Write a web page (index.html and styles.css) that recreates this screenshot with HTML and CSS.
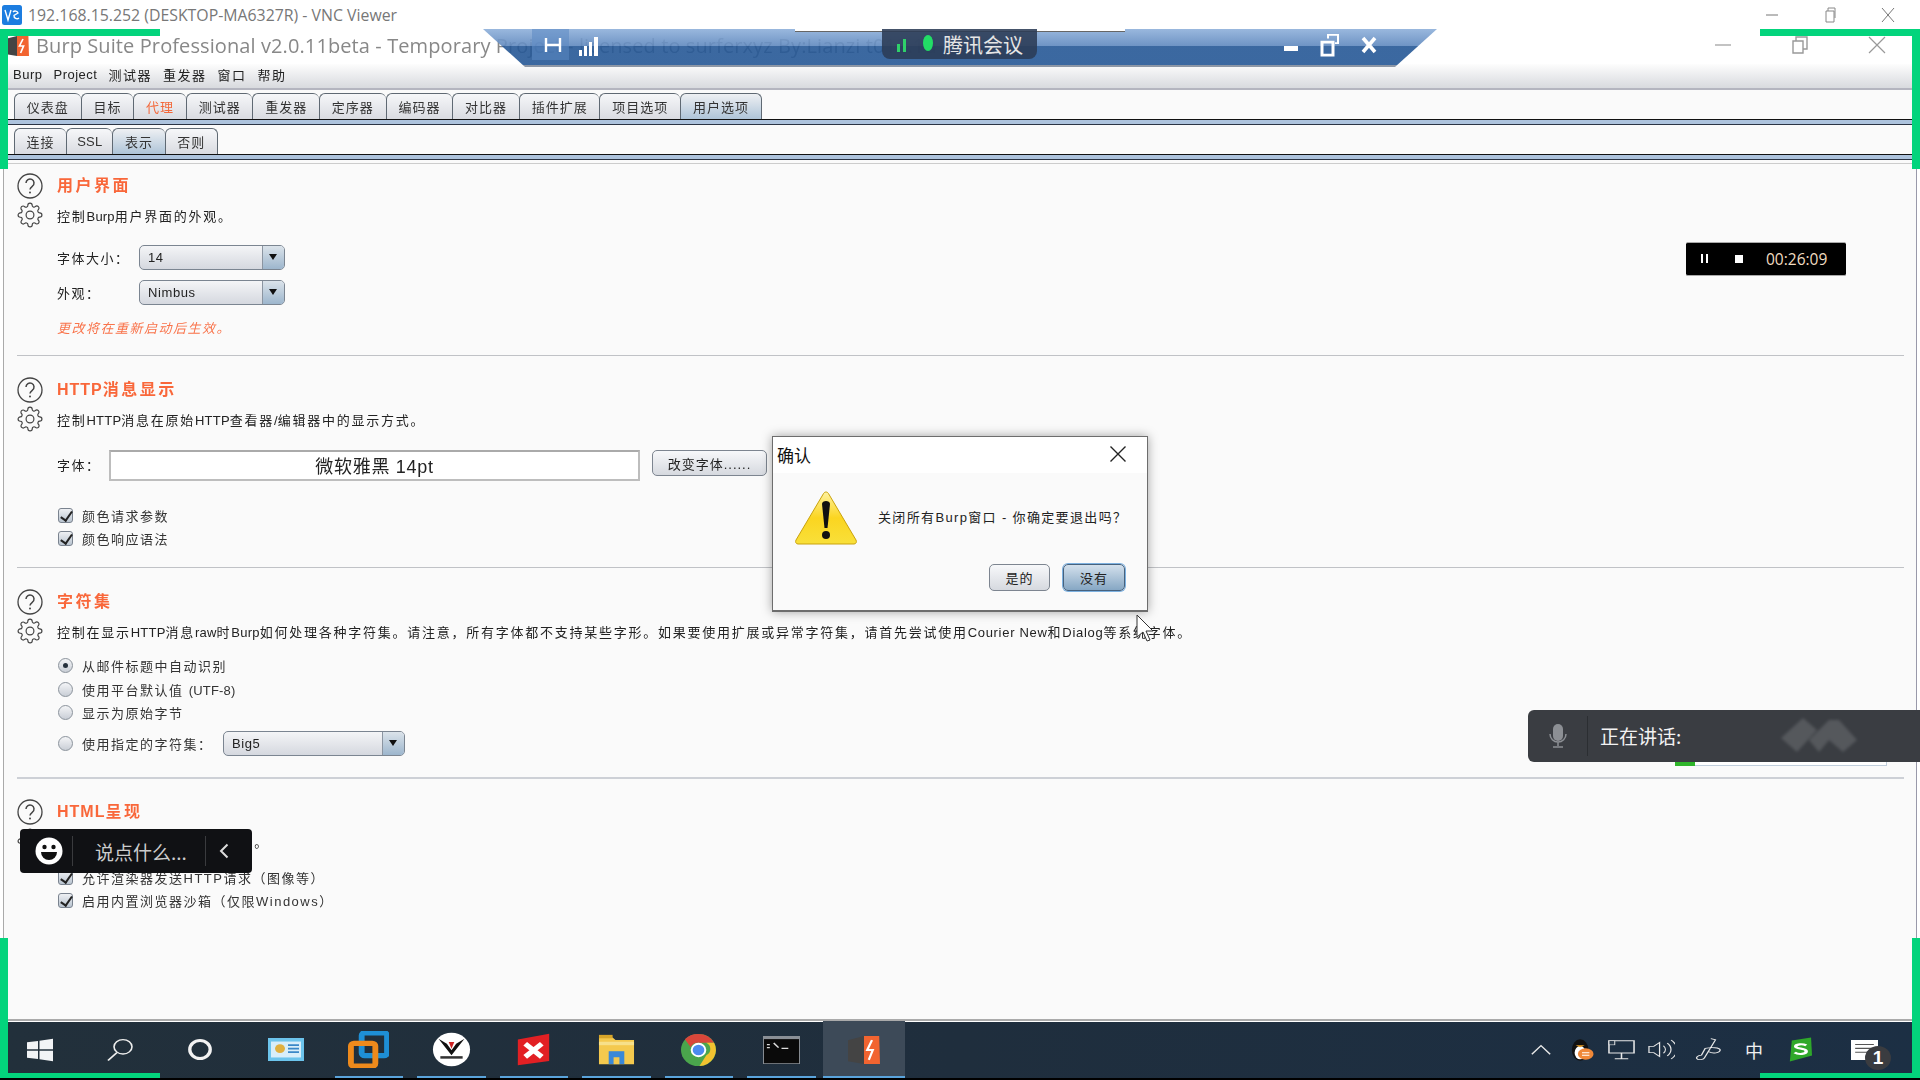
FILE: index.html
```html
<!DOCTYPE html>
<html lang="zh-CN">
<head>
<meta charset="utf-8">
<title>Burp Suite over VNC</title>
<link rel="stylesheet" href="styles.css">
</head>
<body>
<svg class="defs" width="0" height="0" aria-hidden="true">
  <symbol id="help" viewBox="0 0 26 26"><circle cx="13" cy="13" r="12" fill="none" stroke="#444" stroke-width="1.3"/><path d="M9 10a4 4 0 1 1 6.4 3.2c-1.5 1.1-2.4 1.7-2.4 3.4" fill="none" stroke="#444" stroke-width="1.5"/><circle cx="13" cy="19.6" r="1" fill="#444"/></symbol>
  <symbol id="gear" viewBox="0 0 24 24"><g fill="none" stroke="#444" stroke-width="1.1"><circle cx="12" cy="12" r="3.6"/><path d="M19.4 15a1.65 1.65 0 0 0 .33 1.82l.06.06a2 2 0 0 1 0 2.83 2 2 0 0 1-2.83 0l-.06-.06a1.65 1.65 0 0 0-1.82-.33 1.65 1.65 0 0 0-1 1.51V21a2 2 0 0 1-2 2 2 2 0 0 1-2-2v-.09A1.65 1.65 0 0 0 9 19.4a1.65 1.65 0 0 0-1.82.33l-.06.06a2 2 0 0 1-2.83 0 2 2 0 0 1 0-2.83l.06-.06a1.65 1.65 0 0 0 .33-1.82 1.65 1.65 0 0 0-1.51-1H3a2 2 0 0 1-2-2 2 2 0 0 1 2-2h.09A1.65 1.65 0 0 0 4.6 9a1.65 1.65 0 0 0-.33-1.82l-.06-.06a2 2 0 0 1 0-2.83 2 2 0 0 1 2.83 0l.06.06a1.65 1.65 0 0 0 1.82.33H9a1.65 1.65 0 0 0 1-1.51V3a2 2 0 0 1 2-2 2 2 0 0 1 2 2v.09a1.65 1.65 0 0 0 1 1.51 1.65 1.65 0 0 0 1.82-.33l.06-.06a2 2 0 0 1 2.83 0 2 2 0 0 1 0 2.83l-.06.06a1.65 1.65 0 0 0-.33 1.82V9a1.65 1.65 0 0 0 1.51 1H21a2 2 0 0 1 2 2 2 2 0 0 1-2 2h-.09a1.65 1.65 0 0 0-1.51 1z"/></g></symbol>
  <symbol id="burp" viewBox="0 0 20 20" preserveAspectRatio="none"><path d="M0 3l10-3v20L0 18z" fill="#444"/><path d="M10 0h9.500l.5 20H10z" fill="#f26430"/><path d="M15 3l-3 7h3.500l-2.500 7" fill="none" stroke="#fff" stroke-width="1.400"/></symbol>
</svg>

<header class="vnc-bar">
  <svg class="vnc-logo" width="20" height="20" viewBox="0 0 20 20"><rect width="20" height="20" rx="2.5" fill="#1c7de0"/><path d="M3 5l3 10 3-10M11 7a3 3 0 0 1 5 1l-4 2.5a3 3 0 0 0 5 2.5" fill="none" stroke="#fff" stroke-width="1.4"/></svg>
  <span class="vnc-title">192.168.15.252 (DESKTOP-MA6327R) - VNC Viewer</span>
  <div class="wc wc-vnc">
    <svg width="14" height="14" viewBox="0 0 14 14"><path d="M1 7h12" stroke="#777"/></svg>
    <svg width="14" height="16" viewBox="0 0 14 16"><path d="M3 4h8v11H3zM5 4V1h7v10" fill="none" stroke="#888"/></svg>
    <svg width="14" height="16" viewBox="0 0 14 16"><path d="M1 1l12 14M13 1L1 15" stroke="#777"/></svg>
  </div>
</header>

<main class="window">
  <div class="burp-title">
    <svg class="burp-logo" width="24" height="20"><use href="#burp"/></svg>
    <span class="burp-name">Burp Suite Professional v2.0.11beta - Temporary Project - licensed to surferxyz By:Lianzi t012.1d</span>
    <div class="wc wc-burp">
      <svg width="18" height="14" viewBox="0 0 18 14"><path d="M1 7h16" stroke="#aaa" stroke-width="1.4"/></svg>
      <svg width="18" height="18" viewBox="0 0 18 18"><path d="M2 5h10v12H2zM5 5V1h11v12h-4" fill="none" stroke="#999" stroke-width="1.4"/></svg>
      <svg width="18" height="18" viewBox="0 0 18 18"><path d="M1 1l16 16M17 1L1 17" stroke="#999" stroke-width="1.2"/></svg>
    </div>
  </div>

  <nav class="menu"><span class="menu-latin">Burp</span><span class="menu-latin">Project</span><span>测试器</span><span>重发器</span><span>窗口</span><span>帮助</span></nav>

  <div class="tabs">
    <span class="tab">仪表盘</span><span class="tab">目标</span><span class="tab tab-hot">代理</span><span class="tab">测试器</span><span class="tab">重发器</span><span class="tab">定序器</span><span class="tab">编码器</span><span class="tab">对比器</span><span class="tab">插件扩展</span><span class="tab">项目选项</span><span class="tab tab-on">用户选项</span>
  </div>
  <div class="strip"></div>
  <div class="tabs">
    <span class="tab tab-sub">连接</span><span class="tab tab-sub tab-latin">SSL</span><span class="tab tab-sub tab-on">表示</span><span class="tab tab-sub">否则</span>
  </div>
  <div class="strip strip-sub"></div>

  <div class="content">
    <section class="sec">
      <div class="head"><svg class="ico" width="26" height="26"><use href="#help"/></svg><h2>用户界面</h2></div>
      <div class="desc"><svg class="ico gear" width="26" height="26"><use href="#gear"/></svg><p>控制<span class="latin">Burp</span>用户界面的外观。</p></div>
      <div class="form form-ui">
        <div class="row"><label class="lab-ui">字体大小：</label><div class="combo combo-ui"><span>14</span><i class="arrow"></i></div></div>
        <div class="row"><label class="lab-ui">外观：</label><div class="combo combo-ui"><span>Nimbus</span><i class="arrow"></i></div></div>
        <em class="note">更改将在重新启动后生效。</em>
      </div>
    </section>
    <hr class="rule rule-1">

    <section class="sec">
      <div class="head"><svg class="ico" width="26" height="26"><use href="#help"/></svg><h2><span class="latin-h">HTTP</span>消息显示</h2></div>
      <div class="desc"><svg class="ico gear" width="26" height="26"><use href="#gear"/></svg><p>控制<span class="latin">HTTP</span>消息在原始<span class="latin">HTTP</span>查看器<span class="latin">/</span>编辑器中的显示方式。</p></div>
      <div class="form form-http">
        <div class="row row-font"><label class="lab-font">字体：</label><div class="font-box">微软雅黑 14pt</div><button class="btn btn-font">改变字体......</button></div>
        <div class="checks checks-http">
          <div class="opt"><i class="check"></i>颜色请求参数</div>
          <div class="opt"><i class="check"></i>颜色响应语法</div>
        </div>
      </div>
    </section>
    <hr class="rule rule-2">

    <section class="sec">
      <div class="head"><svg class="ico" width="26" height="26"><use href="#help"/></svg><h2>字符集</h2></div>
      <div class="desc"><svg class="ico gear" width="26" height="26"><use href="#gear"/></svg><p>控制在显示<span class="latin">HTTP</span>消息<span class="latin">raw</span>时<span class="latin">Burp</span>如何处理各种字符集。请注意，所有字体都不支持某些字形。如果要使用扩展或异常字符集，请首先尝试使用<span class="latin-wide">Courier New</span>和<span class="latin-wide">Dialog</span>等系统字体。</p></div>
      <div class="form form-charset">
        <div class="opt"><i class="radio radio-on"></i>从邮件标题中自动识别</div>
        <div class="opt"><i class="radio"></i><span>使用平台默认值 <span class="latin">(UTF-8)</span></span></div>
        <div class="opt"><i class="radio"></i>显示为原始字节</div>
        <div class="opt opt-combo"><i class="radio"></i><span class="opt-label">使用指定的字符集：</span><div class="combo combo-charset"><span>Big5</span><i class="arrow"></i></div></div>
      </div>
    </section>
    <hr class="rule rule-3">

    <section class="sec">
      <div class="head"><svg class="ico" width="26" height="26"><use href="#help"/></svg><h2><span class="latin-h">HTML</span>呈现</h2></div>
      <div class="desc"><svg class="ico gear" width="26" height="26"><use href="#gear"/></svg><p>控制<span class="latin">Burp</span>如何呈现<span class="latin">HTML</span>的内容。</p></div>
      <div class="form checks-html">
        <div class="opt"><i class="check"></i>允许渲染器发送HTTP请求（图像等）</div>
        <div class="opt"><i class="check"></i>启用内置浏览器沙箱（仅限Windows）</div>
      </div>
    </section>
  </div>
</main>

<footer class="taskbar">
  <div class="slot slot-sys"><svg width="28" height="24" viewBox="0 0 28 28" preserveAspectRatio="none"><path d="M1 5l11-1.6V13H1zM13.500 3.200L27 1v12H13.500zM1 15h11v9.600L1 23zM13.500 15H27v12l-13.500-2.200z" fill="#f2f4f6"/></svg></div>
  <div class="slot slot-sys"><svg width="30" height="24" viewBox="0 0 30 30" preserveAspectRatio="none"><circle cx="18" cy="11" r="9" fill="none" stroke="#eee" stroke-width="1.6"/><path d="M12 18L3 28" stroke="#eee" stroke-width="1.8"/></svg></div>
  <div class="slot slot-sys"><svg width="26" height="23" viewBox="0 0 28 28" preserveAspectRatio="none"><circle cx="14" cy="14" r="11" fill="none" stroke="#f2f2f2" stroke-width="3.600"/></svg></div>
  <div class="apps">
    <div class="slot slot-app slot-bare"><svg width="36" height="23" viewBox="0 0 36 26" preserveAspectRatio="none"><rect width="36" height="26" fill="#6cc4ec"/><rect x="3" y="4" width="30" height="18" fill="#d8eefa"/><circle cx="12" cy="12" r="5" fill="#e0b040"/><path d="M20 8h11M20 12h11M20 16h11" stroke="#3a88c8" stroke-width="2"/></svg></div>
    <div class="slot slot-app"><svg width="41" height="37" viewBox="0 0 42 42" preserveAspectRatio="none"><rect x="14" y="2" width="26" height="26" rx="3" fill="none" stroke="#1e8fd6" stroke-width="6"/><rect x="3" y="14" width="25" height="26" rx="3" fill="none" stroke="#ee8a1c" stroke-width="6"/></svg></div>
    <div class="slot slot-app"><svg width="39" height="35" viewBox="0 0 42 42" preserveAspectRatio="none"><circle cx="21" cy="21" r="20" fill="#fff"/><path d="M7 8l14 20L35 8 26 14l-5 8-5-8z" fill="#111"/><path d="M18 12l3 8 3-8z" fill="#c22"/><rect x="9" y="29" width="24" height="3" fill="#333"/></svg></div>
    <div class="slot slot-app"><svg width="35" height="33" viewBox="0 0 38 40" preserveAspectRatio="none"><path d="M2 8l34-7v33L2 39z" fill="#e22024"/><path d="M10 13l18 16M28 13L10 29" stroke="#fff" stroke-width="6"/></svg></div>
    <div class="slot slot-app"><svg width="37" height="31" viewBox="0 0 38 36" preserveAspectRatio="none"><path d="M1 4h14l3 3h19v28H1z" fill="#f4c94e"/><rect x="1" y="1" width="14" height="4" fill="#d6a52a"/><rect x="1" y="9" width="36" height="4" fill="#f7e08a"/><rect x="11" y="20" width="16" height="15" fill="#3a88d8"/><rect x="16" y="27" width="6" height="8" fill="#f4c94e"/></svg></div>
    <div class="slot slot-app"><svg width="37" height="34" viewBox="0 0 38 38" preserveAspectRatio="none"><circle cx="19" cy="19" r="18" fill="#4aa54c"/><path d="M19 1a18 18 0 0 1 16 10H19a8 8 0 0 0-8 5L5 7a18 18 0 0 1 14-6z" fill="#d9463a"/><path d="M35 11a18 18 0 0 1-15 26l7-12a8 8 0 0 0 0-14z" fill="#f2c230"/><circle cx="19" cy="19" r="8" fill="#fff"/><circle cx="19" cy="19" r="6" fill="#4c8bf0"/></svg></div>
    <div class="slot slot-app"><svg width="37" height="28" viewBox="0 0 38 36" preserveAspectRatio="none"><rect width="38" height="36" fill="#8a8f96"/><rect x="1" y="4" width="36" height="31" fill="#0a0a0a"/><path d="M4 11h3M4 15h3M11 9l5 6M19 16h7" stroke="#ddd" stroke-width="1.6"/></svg></div>
    <div class="slot slot-app slot-active"><svg width="32" height="28"><use href="#burp"/></svg></div>
  </div>
  <div class="tray">
    <svg width="22" height="11" viewBox="0 0 24 14" preserveAspectRatio="none"><path d="M2 13L12 2l10 11" fill="none" stroke="#e8e8e8" stroke-width="1.6"/></svg>
    <svg class="tr-qq" width="24" height="24" viewBox="0 0 26 36" preserveAspectRatio="none"><ellipse cx="11" cy="18" rx="9" ry="16" fill="#111"/><ellipse cx="11" cy="22" rx="6" ry="10" fill="#fff"/><path d="M6 11h10l-5 3z" fill="#f0a020"/><circle cx="17" cy="24" r="8.500" fill="#f08838"/><path d="M13 22h8M13 26h8" stroke="#fff" stroke-width="1.6"/></svg>
    <svg class="tr-net" width="27" height="21" viewBox="0 0 28 36" preserveAspectRatio="none"><path d="M1 3h26v21H1zM14 24v10M7 34h14" fill="none" stroke="#e8e8e8" stroke-width="1.6"/><rect x="1" y="3" width="6" height="7" fill="#28394a" stroke="#e8e8e8"/></svg>
    <svg class="tr-vol" width="27" height="23" viewBox="0 0 28 36" preserveAspectRatio="none"><path d="M1 13h5l6-6v22l-6-6H1z" fill="none" stroke="#e8e8e8" stroke-width="1.300"/><path d="M16 12a10 10 0 0 1 0 12M20 8a15 15 0 0 1 0 20M24 3a22 22 0 0 1 0 30" fill="none" stroke="#e8e8e8" stroke-width="1.300"/></svg>
    <svg class="tr-pen" width="28" height="25" viewBox="0 0 30 44" preserveAspectRatio="none"><path d="M18 3l5 2-12 32c-1 3-7 4-8 1s1-5 5-6l4-12c6-2 16-2 16 3s-8 7-12 3" fill="none" stroke="#e8e8e8" stroke-width="1.500"/></svg>
    <span class="tr-ime">中</span>
    <svg class="tr-s" width="27" height="25" viewBox="0 0 28 42" preserveAspectRatio="none"><path d="M6 6l20-5 1 30L4 41z" fill="#2fa82a"/><path d="M21 14c-4-3-11-2-11 2s11 3 11 8-8 6-12 2" fill="none" stroke="#fff" stroke-width="3.500"/></svg>
    <div class="tr-note"><svg width="27" height="20" viewBox="0 0 26 36" preserveAspectRatio="none"><rect width="26" height="36" fill="#fff"/><path d="M4 8h18M4 15h18M4 22h18" stroke="#555" stroke-width="2"/></svg><b class="badge">1</b></div>
  </div>
</footer>

<div class="corner corner-tl"></div>
<div class="corner corner-tr"></div>
<div class="corner corner-bl"></div>
<div class="corner corner-br"></div>

<div class="meet">
  <div class="meet-notch"></div>
  <div class="meet-pin"><svg width="20" height="18" viewBox="0 0 20 18"><path d="M3 2v14M17 2v14M3 9h14" stroke="#fff" stroke-width="2.400"/></svg></div>
  <svg class="meet-signal" width="22" height="20" viewBox="0 0 22 20"><path d="M1 14h3v6H1zM6 10h3v10H6zM11 6h3v14h-3zM16 1h4v19h-4z" fill="#fff"/></svg>
  <div class="meet-pill"><svg width="52" height="20" viewBox="0 0 52 20"><path d="M9 10h3v8H9zM15 5h3v13h-3z" fill="#2fd06a"/><ellipse cx="40" cy="9" rx="5" ry="8" fill="#22dd66"/></svg><span>腾讯会议</span></div>
  <div class="meet-wc">
    <svg width="16" height="16" viewBox="0 0 16 16"><rect x="1" y="9" width="14" height="5" fill="#fff"/></svg>
    <svg width="20" height="24" viewBox="0 0 20 26" preserveAspectRatio="none"><path d="M2 10h11v14H2z" fill="none" stroke="#fff" stroke-width="3"/><path d="M8 6V2h10v9h-3" fill="none" stroke="#fff" stroke-width="2"/></svg>
    <svg width="16" height="18" viewBox="0 0 16 18"><path d="M2 2l12 14M14 2L2 16" stroke="#fff" stroke-width="3.600"/></svg>
  </div>
</div>

<div class="rec"><i class="rec-pause"></i><i class="rec-stop"></i><span>00:26:09</span></div>

<div class="speak-under"><i></i></div>
<div class="speak">
  <svg width="18" height="24" viewBox="0 0 18 24"><rect x="4" y="0" width="10" height="17" rx="5" fill="#8c8f94"/><path d="M1 10a8 8 0 0 0 16 0M9 18v4M4 23h10" fill="none" stroke="#8c8f94" stroke-width="1.500"/></svg>
  <i class="speak-div"></i>
  <span class="speak-text">正在讲话:</span>
  <svg class="speak-blob" width="76" height="36" viewBox="0 0 76 36"><path d="M0 20L22 0l14 12L16 34zM28 22L48 2h10l18 20-14 12-14-12-10 12z" fill="#5a5d61"/></svg>
</div>

<div class="chat">
  <svg width="28" height="28" viewBox="0 0 28 28"><circle cx="14" cy="14" r="13.500" fill="#fff"/><circle cx="9.500" cy="10" r="2.200" fill="#111"/><circle cx="18.500" cy="10" r="2.200" fill="#111"/><path d="M6 15h16a8 8 0 0 1-16 0z" fill="#111"/></svg>
  <i class="chat-div"></i>
  <span class="chat-text">说点什么...</span>
  <i class="chat-div chat-div-2"></i>
  <svg width="10" height="16" viewBox="0 0 10 16"><path d="M8.500 1.500L2 8l6.500 6.500" fill="none" stroke="#ddd" stroke-width="2"/></svg>
</div>

<div class="dialog">
  <div class="dlg-title"><span>确认</span><svg width="18" height="18" viewBox="0 0 18 18"><path d="M1.500 1.500l15 15M16.500 1.500l-15 15" stroke="#222" stroke-width="1.400"/></svg></div>
  <div class="dlg-body">
    <svg width="62" height="54" viewBox="0 0 62 54"><defs><linearGradient id="warn" x1="0" y1="0" x2="0" y2="1"><stop offset="0" stop-color="#fff2a0"/><stop offset=".5" stop-color="#fbd520"/><stop offset="1" stop-color="#f9e03a"/></linearGradient></defs><path d="M31 1c1 0 2 .6 2.500 1.600L61 49c1 2 0 4-2 4H3c-2 0-3-2-2-4L28.500 2.600C29 1.600 30 1 31 1z" fill="url(#warn)" stroke="#c9a20c"/><path d="M27 13c0-4 8-4 8 0l-2.500 24h-3z" fill="#111"/><circle cx="31" cy="44" r="4" fill="#111"/></svg>
    <p>关闭所有Burp窗口 - 你确定要退出吗？</p>
  </div>
  <div class="dlg-actions"><button class="btn btn-yes">是的</button><button class="btn btn-no">没有</button></div>
</div>

<svg class="cursor" width="18" height="28" viewBox="0 0 18 28"><path d="M1 1v22l6-5 4 9 3-1-4-9h7z" fill="#fff" stroke="#333"/></svg>
</body>
</html>
```

FILE: styles.css
```css
* { box-sizing: border-box; }
html, body { margin: 0; padding: 0; }
body {
  width: 1920px; height: 1080px; overflow: hidden; position: relative;
  display: flex; flex-direction: column;
  background: #fff; color: #222;
  font-family: "Liberation Sans", "Noto Sans CJK SC", sans-serif;
  font-size: 13px; letter-spacing: 1.5px;
}
i, em { display: block; }
.defs { position: absolute; }

/* VNC title */
.vnc-bar { height: 29px; flex: none; display: flex; align-items: center; padding-left: 2px; background: #fff; }
.vnc-logo { margin-right: 6px; }
.vnc-title { font: 15.850px "Open Sans", sans-serif; color: #777; letter-spacing: 0; }
.wc { margin-left: auto; display: flex; align-items: center; }
.wc-vnc { gap: 44px; padding-right: 25px; }
.wc-burp { gap: 59px; padding-right: 30px; }

/* Burp window */
.window { flex: 1; min-height: 0; position: relative; margin: 0 3px; border-left: 1px solid #aaa; border-right: 1px solid #99a; background: #fafafa; display: flex; flex-direction: column; border-bottom: 2px solid #aaa; overflow: hidden; box-shadow: 0 1px 0 #fff; filter: blur(.3px); }
.burp-title { height: 35px; flex: none; display: flex; align-items: center; padding: 0 0 2px 1px; background: #fff; white-space: nowrap; }
.burp-logo { margin-right: 7px; flex: none; }
.burp-name { font: 20px "Open Sans", sans-serif; color: #888; letter-spacing: .1px; }
.burp-title .wc { position: absolute; right: 0; top: 7px; }
.menu { height: 26px; flex: none; display: flex; align-items: center; gap: 11px; padding: 0 0 4px 9px; background: linear-gradient(#fdfdfd, #d8dade); border-bottom: 2px solid #b4b5bf; letter-spacing: 1.500px; color: #222; }
.menu-latin { letter-spacing: .5px; }

.tabs { height: 29px; flex: none; display: flex; align-items: flex-end; padding-left: 10px; background: #fafafa; }
.tab { height: 26px; display: flex; align-items: center; justify-content: center; padding: 0 11.800px; border: 1px solid #5f6973; border-bottom: 0; border-right-width: 0; border-radius: 6px 6px 0 0; background: linear-gradient(#f6f7f9, #d9dbe1); letter-spacing: 1px; color: #333; white-space: nowrap; }
.tab:last-child { border-right-width: 1px; }
.tab-hot { color: #f3683a; }
.tab-on { background: linear-gradient(#eef0f3, #aec4d8); }
.tab-sub { padding: 0 11.600px; }
.tab-latin { letter-spacing: .2px; padding: 0 10px; }
.strip { height: 6px; flex: none; background: #adc3dd; border-top: 1px solid #111; border-bottom: 1px solid #2b3444; }
.strip-sub { box-shadow: 0 3px 0 #fafafa, 0 4px 0 #ccc; margin-bottom: 4px; }

/* Settings content */
.content { flex: 1; padding: 8px 12px 0 13px; background: #fafafa; }
.head { height: 28px; display: flex; align-items: center; gap: 14px; }
h2 { margin: 0 0 5px; font-size: 16px; font-weight: 700; color: #f9673a; letter-spacing: 2.500px; }
.latin-h { letter-spacing: 1px; }
.latin { letter-spacing: .2px; }
.desc { height: 30px; display: flex; gap: 14px; align-items: flex-start; }
.desc p { margin: 0; padding-top: 7px; line-height: 20px; white-space: nowrap; letter-spacing: 1.750px; }
.desc p .latin { letter-spacing: .2px; }
.desc p .latin-wide { letter-spacing: .7px; }
.gear { margin-top: 2px; flex: none; }
.form { margin-left: 40px; }
.form-ui { margin-top: 15px; display: flex; flex-direction: column; gap: 10px; }
.row { display: flex; align-items: center; height: 25px; }
.lab-ui { width: 82px; flex: none; }
.lab-font { width: 52px; flex: none; }
.combo { display: flex; align-items: center; justify-content: space-between; height: 25px; border: 1px solid #7b8591; border-radius: 5px; background: linear-gradient(#f4f5f7, #d5d8df); padding-left: 8px; letter-spacing: .6px; color: #222; overflow: hidden; }
.combo-ui { width: 146px; }
.combo-charset { width: 182px; }
.arrow { width: 22px; height: 100%; border-left: 1px solid #8b95a1; background: linear-gradient(#dbe3ea, #9db6cd); position: relative; }
.arrow::after { content: ""; position: absolute; left: 6px; top: 8px; border: 4.500px solid transparent; border-top: 6px solid #111; border-bottom: 0; }
.note { margin-top: 4px; height: 20px; line-height: 20px; color: #f9734a; font-style: italic; }
.rule { margin: 0; border: 0; height: 1px; background: #c0c2c6; }
.rule-1 { margin-top: 16px; margin-bottom: 20px; }
.rule-2 { margin-top: 17px; margin-bottom: 20px; }
.rule-3 { margin-top: 21px; margin-bottom: 19px; height: 2px; background: #cdd0d6; }
.form-http { margin-top: 16px; }
.row-font { height: 31px; align-items: flex-start; }
.lab-font { line-height: 32px; }
.font-box { width: 531px; height: 31px; border: 2px solid #bdbdbd; border-top-color: #aaa; background: #fff; display: flex; align-items: center; justify-content: center; padding-bottom: 2px; font-size: 18px; letter-spacing: .7px; color: #222; }
.btn { font: inherit; color: #222; letter-spacing: 1px; border: 1px solid #7d8590; border-radius: 5px; background: linear-gradient(#f7f8fa, #d6d9df); padding: 0; }
.btn-font { width: 115px; height: 26px; margin-left: 12px; }
.checks-http { margin-top: 23px; }
.checks-html { margin-top: 10px; }
.opt { height: 23px; display: flex; align-items: center; gap: 8px; margin-left: 2px; white-space: nowrap; color: #333; }
.check { width: 15px; height: 15px; margin-left: -1px; margin-right: 1px; border: 1px solid #7a838f; border-radius: 3px; background: linear-gradient(#eef0f3, #b9c4d0); position: relative; flex: none; }
.check::after { content: ""; position: absolute; left: 4px; top: 0; width: 5px; height: 10px; border: solid #222; border-width: 0 2px 2px 0; transform: rotate(35deg); }
.radio { width: 15px; height: 15px; margin-left: -1px; margin-right: 1px; border: 1px solid #8b939c; border-radius: 50%; background: linear-gradient(#f4f5f7, #c9ced6); position: relative; flex: none; }
.radio-on::after { content: ""; position: absolute; left: 4px; top: 4px; width: 5px; height: 5px; border-radius: 50%; background: #26313d; }
.form-charset { margin-top: 8px; }
.form-charset .opt { height: 23.500px; }
.form-charset .opt-combo { height: 25px; margin-top: 6.500px; }
.opt-label { width: 133px; flex: none; }

/* Taskbar */
.taskbar { height: 59px; flex: none; display: flex; align-items: center; padding-bottom: 2px; background: linear-gradient(#000, #000) bottom / 100% 2px no-repeat, linear-gradient(90deg, #22303b, #1f2e3d 50%, #1c2f44); }
.slot { height: 57px; flex: none; display: flex; align-items: center; justify-content: center; position: relative; }
.slot-sys { width: 80px; }
.apps { display: flex; margin-left: 5px; }
.slot-app { width: 82.500px; }
.slot-app::after { content: ""; position: absolute; left: 7px; right: 7px; bottom: 0; height: 2px; background: #5aa4dc; }
.slot-bare::after { display: none; }
.slot-active { background: #3d4a58; }
.slot-active::after { left: 0; right: 0; }
.tray { margin-left: auto; display: flex; align-items: center; padding-right: 42px; }
.tr-qq { margin-left: 18px; }
.tr-net { margin-left: 14px; }
.tr-vol { margin-left: 13px; }
.tr-pen { margin-left: 19px; }
.tr-ime { margin-left: 23px; color: #f0f0f0; font-size: 18px; letter-spacing: 0; }
.tr-s { margin-left: 23px; }
.tr-note { margin-left: 38px; position: relative; display: flex; }
.badge { position: absolute; left: 14px; top: 6px; width: 26px; height: 24px; border-radius: 50%; background: #3a3c40; color: #fff; font-size: 19px; letter-spacing: 0; display: flex; align-items: center; justify-content: center; }

/* Remote-session frame corners */
.corner { position: absolute; width: 160px; border: 0 solid #03d47c; }
.corner-tl { left: 0; top: 29px; height: 140px; border-left-width: 8px; border-top-width: 7px; }
.corner-tr { right: 0; top: 29px; height: 140px; border-right-width: 8px; border-top-width: 7px; }
.corner-bl { left: 0; bottom: 2px; height: 140px; border-left-width: 8px; border-bottom-width: 5px; }
.corner-br { right: 0; bottom: 2px; height: 140px; border-right-width: 8px; border-bottom-width: 5px; }

/* Meeting toolbar */
.meet { position: absolute; left: 483px; top: 29px; width: 954px; height: 38px; clip-path: polygon(0 0, 100% 0, 912px 100%, 42px 100%); background: linear-gradient(rgba(142, 176, 218, .9), rgba(95, 136, 190, .9) 45%, rgba(38, 88, 150, .9) 46%, rgba(38, 88, 150, .9) 95%, #8d97a6 95%); letter-spacing: 0; }
.meet-notch { position: absolute; left: 312px; top: 0; width: 330px; height: 3px; background: #fff; border-bottom: 1px solid #666; }
.meet-pin { position: absolute; left: 49px; top: 0; width: 37px; height: 31px; background: rgba(91, 137, 194, .55); display: flex; align-items: center; justify-content: center; padding-left: 4px; }
.meet-signal { position: absolute; left: 95px; top: 7px; }
.meet-pill { position: absolute; left: 399px; top: 0; width: 155px; height: 30px; border-radius: 0 0 8px 8px; background: rgba(43, 59, 85, .88); color: #e6e6e6; font-size: 20px; display: flex; align-items: center; gap: 3px; padding-left: 6px; font-family: "Noto Sans CJK SC", sans-serif; white-space: nowrap; }
.meet-wc { position: absolute; left: 800px; top: 4px; display: flex; align-items: center; gap: 21px; }

/* Recorder */
.rec { position: absolute; left: 1686px; top: 242px; width: 160px; height: 34px; background: #000; border: 1px solid #aaa; border-width: 1px 0; display: flex; align-items: center; border-radius: 2px; color: #f0dcc0; font: 15.500px "Open Sans", sans-serif; letter-spacing: 0; padding-bottom: 1px; }
.rec-pause { width: 7px; height: 9px; margin-left: 15px; border: solid #fff; border-width: 0 2px; }
.rec-stop { width: 8px; height: 8px; margin-left: 27px; background: #fff; }
.rec span { margin-left: 23px; }

/* Speaking toast */
.speak-under { position: absolute; left: 1675px; top: 750px; width: 212px; height: 16px; background: #fff; border: 1px solid #c0cedc; border-left: 0; }
.speak-under i { width: 20px; height: 6px; margin-top: 9px; background: #2fb52a; }
.speak { position: absolute; left: 1528px; top: 710px; width: 392px; height: 52px; background: #3a3d42; border-radius: 6px 0 0 6px; display: flex; align-items: center; padding-left: 21px; color: #f2f2f2; letter-spacing: 0; }
.speak-div { width: 1px; height: 40px; margin-left: 20px; background: #2b2e32; }
.speak-text { margin: 0 0 2px 12px; font-size: 19px; font-family: "Noto Sans CJK SC", sans-serif; }
.speak-blob { margin-left: 100px; opacity: .85; filter: blur(1.5px); }

/* Chat pill */
.chat { position: absolute; left: 20px; top: 829px; width: 232px; height: 44px; background: #101114; border-radius: 4px; display: flex; align-items: center; padding-left: 15px; color: #ccc; letter-spacing: 0; }
.chat-div { width: 1px; height: 30px; margin-left: 9px; background: #3a3b3e; }
.chat-text { width: 132px; padding-left: 22px; font-size: 19px; font-family: "Noto Sans CJK SC", sans-serif; white-space: nowrap; }
.chat-div-2 { margin: 0 13px 0 0; }

/* Confirm dialog */
.dialog { position: absolute; left: 772px; top: 436px; width: 376px; height: 176px; background: #fafafa; border: 1px solid #6d6d6d; border-bottom-width: 2px; box-shadow: 0 0 10px rgba(0, 0, 0, .35); letter-spacing: 1.350px; }
.dlg-title { height: 36px; background: #fff; display: flex; align-items: center; justify-content: space-between; padding: 0 20px 2px 4px; font-family: "Noto Sans CJK SC", sans-serif; font-size: 17px; letter-spacing: 0; color: #111; }
.dlg-body { display: flex; align-items: center; gap: 21px; padding: 18px 0 0 22px; }
.dlg-body p { margin: 0 0 4px; font-size: 13px; white-space: nowrap; }
.dlg-actions { display: flex; justify-content: flex-end; gap: 13px; padding: 19px 22px 0 0; }
.btn-yes { width: 61px; height: 27px; }
.btn-no { width: 62px; height: 27px; background: linear-gradient(#d3e0ec, #86a7c4); border: 1px solid #47627e; box-shadow: 0 0 0 1px #7db1e0; }

.cursor { position: absolute; left: 1136px; top: 614px; }
```
